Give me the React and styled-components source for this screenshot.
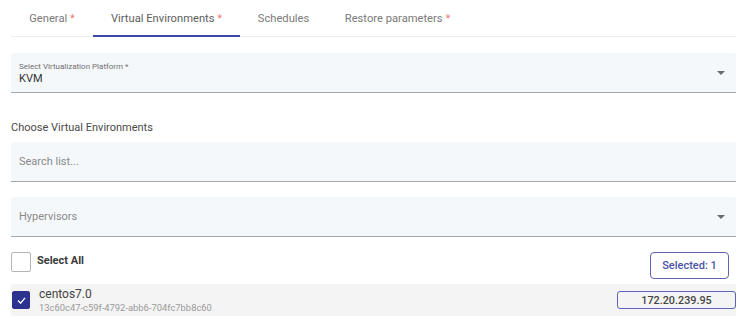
import React from 'react';
import styled, { createGlobalStyle } from 'styled-components';

const GlobalStyle = createGlobalStyle`
  body {
    margin: 0;
    background: #ffffff;
    font-family: Roboto, "Liberation Sans", Arial, sans-serif;
  }
`;

const tabs = [
  { label: 'General', required: true, width: 82 },
  { label: 'Virtual Environments', required: true, width: 147, active: true },
  { label: 'Schedules', required: false, width: 87 },
  { label: 'Restore parameters', required: true, width: 141 },
];

function Arrow() {
  return (
    <svg width="8" height="4" viewBox="0 0 8 4">
      <path d="M0 0 L8 0 L4 4 Z" fill="#6a6a6a" />
    </svg>
  );
}

function Check() {
  return (
    <svg width="9" height="7" viewBox="0 0 10 8">
      <path d="M1 4 L4 7 L9 1" fill="none" stroke="#fff" strokeWidth="1.6" />
    </svg>
  );
}

export default function App() {
  return (
    <>
      <GlobalStyle />
      <Page>
        <TabBar>
          {tabs.map((t) => (
            <Tab key={t.label} $active={t.active} $width={t.width}>
              {t.label}
              {t.required && <Star> *</Star>}
            </Tab>
          ))}
        </TabBar>

        <Field $mt={16}>
          <SelectValue>
            <SmallLabel>Select Virtualization Platform *</SmallLabel>
            <Value>KVM</Value>
          </SelectValue>
          <Arrow />
        </Field>

        <SectionTitle>Choose Virtual Environments</SectionTitle>

        <Field>
          <Placeholder>Search list...</Placeholder>
        </Field>

        <Field $mt={15}>
          <Placeholder>Hypervisors</Placeholder>
          <Arrow />
        </Field>

        <ToolRow>
          <SelectAll>
            <Box />
            <BoldText>Select All</BoldText>
          </SelectAll>
          <SelectedButton>Selected: 1</SelectedButton>
        </ToolRow>

        <ItemRow>
          <ItemMain>
            <Box $checked>
              <Check />
            </Box>
            <ItemText>
              <ItemName>centos7.0</ItemName>
              <ItemId>13c60c47-c59f-4792-abb6-704fc7bb8c60</ItemId>
            </ItemText>
          </ItemMain>
          <IpChip>172.20.239.95</IpChip>
        </ItemRow>
      </Page>
    </>
  );
}

const Page = styled.div`
  width: 725px;
  margin-left: 11px;
  display: flex;
  flex-direction: column;
`;

const TabBar = styled.div`
  display: flex;
  height: 37px;
  box-sizing: border-box;
  border-bottom: 1px solid #ececec;
`;

const Tab = styled.div`
  width: ${(p) => p.$width}px;
  display: flex;
  align-items: center;
  justify-content: center;
  padding-top: 2px;
  box-sizing: border-box;
  font-size: 11.2px;
  color: ${(p) => (p.$active ? '#5e5e5e' : '#7a7a7a')};
  border-bottom: 2px solid ${(p) => (p.$active ? '#3d47a6' : 'transparent')};
  margin-bottom: -1px;
  white-space: nowrap;
`;

const Star = styled.span`
  color: #ef7b7b;
  white-space: pre;
`;

const Field = styled.div`
  margin-top: ${(p) => p.$mt || 0}px;
  height: 40px;
  box-sizing: border-box;
  background: #f5f8fb;
  border-bottom: 1px solid #a6a6a6;
  border-radius: 3px 3px 0 0;
  display: flex;
  align-items: center;
  justify-content: space-between;
  padding: 0 11px 0 8px;
`;

const SelectValue = styled.div`
  display: flex;
  flex-direction: column;
  gap: 1px;
  padding-top: 2px;
`;

const SmallLabel = styled.div`
  font-size: 8px;
  color: #6f6f6f;
`;

const Value = styled.div`
  font-size: 11px;
  color: #333;
`;

const Placeholder = styled.div`
  font-size: 11px;
  color: #8a8a8a;
`;

const SectionTitle = styled.div`
  font-size: 11px;
  color: #4a4a4a;
  height: 49px;
  line-height: 14px;
  padding-top: 28px;
  box-sizing: border-box;
`;

const ToolRow = styled.div`
  margin-top: 15px;
  display: flex;
  justify-content: space-between;
  align-items: flex-start;
  padding-right: 7px;
`;

const SelectAll = styled.div`
  display: flex;
  align-items: center;
  gap: 6px;
`;

const Box = styled.div`
  width: ${(p) => (p.$checked ? 18 : 20)}px;
  height: ${(p) => (p.$checked ? 18 : 20)}px;
  box-sizing: border-box;
  border-radius: 2px;
  border: 1px solid ${(p) => (p.$checked ? '#2b338f' : '#b5b5b5')};
  background: ${(p) => (p.$checked ? '#2b338f' : '#fff')};
  display: flex;
  align-items: center;
  justify-content: center;
  flex-shrink: 0;
`;

const BoldText = styled.span`
  font-size: 11px;
  font-weight: 700;
  color: #3a3a3a;
  margin-top: -4px;
`;

const SelectedButton = styled.div`
  width: 79px;
  height: 27px;
  box-sizing: border-box;
  border: 1px solid #5d64b5;
  border-radius: 4px;
  display: flex;
  align-items: center;
  justify-content: center;
  font-size: 11px;
  font-weight: 500;
  color: #4b52a6;
`;

const ItemRow = styled.div`
  margin-top: 5px;
  height: 32px;
  background: #f4f4f4;
  display: flex;
  align-items: center;
  justify-content: space-between;
`;

const ItemMain = styled.div`
  display: flex;
  align-items: center;
  gap: 9px;
  padding-left: 1px;
`;

const ItemText = styled.div`
  display: flex;
  flex-direction: column;
  gap: 1px;
`;

const ItemName = styled.div`
  font-size: 12px;
  color: #444;
`;

const ItemId = styled.div`
  font-size: 9.4px;
  color: #9a9a9a;
`;

const IpChip = styled.div`
  width: 119px;
  height: 18px;
  box-sizing: border-box;
  border: 1px solid #5d64b5;
  border-radius: 3px;
  display: flex;
  align-items: center;
  justify-content: center;
  font-size: 10.8px;
  font-weight: 500;
  color: #444;
`;
